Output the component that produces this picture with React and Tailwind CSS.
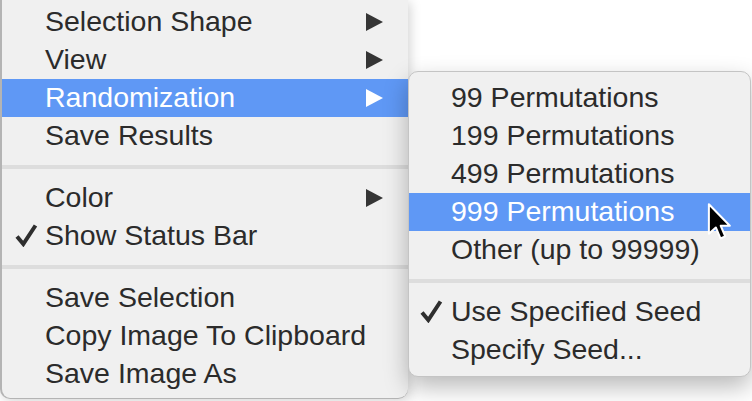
import React from "react";

const Arrow = ({ white }) => (
  <svg width="17" height="18" viewBox="0 0 17 18" className="ml-auto shrink-0">
    <path d="M0 0 L17 9 L0 18 Z" fill={white ? "#ffffff" : "#353535"} />
  </svg>
);

function Row({ label, sub, checked, active, pl = "pl-[43px]", checkLeft = "left-[12px]" }) {
  return (
    <div
      className={`relative flex h-[38px] items-center ${pl} pr-[25px] ${
        active ? "bg-[#5f98f5] text-white" : "text-[#2b2b2b]"
      }`}
    >
      {checked && (
        <span className={`absolute ${checkLeft} top-[6px]`}>
          <svg width="24" height="24" viewBox="0 0 24 24">
            <path d="M3 13.5 L9.3 21 L21.5 2.5" fill="none" stroke="#2e2e2e" strokeWidth="4" strokeLinejoin="miter" />
          </svg>
        </span>
      )}
      <span className="text-[28.5px] leading-none whitespace-nowrap -mt-[1px]">{label}</span>
      {sub && <Arrow white={active} />}
    </div>
  );
}

const Sep = () => (
  <div className="flex h-[24px] items-center">
    <div className="h-[4px] w-full bg-[#dddddd]" />
  </div>
);

export default function App() {
  return (
    <div className="relative h-[401px] w-[752px] overflow-hidden bg-white font-['Liberation_Sans',Arial,sans-serif]">
      <div className="flex items-start">
        <div className="relative z-0 h-[399px] w-[408px] shrink-0 rounded-b-[10px] border-l-2 border-b border-[#b4b4b4] bg-[#f0f0f0] pt-[3px] shadow-[2px_2px_12px_rgba(0,0,0,0.18)]">
          <Row label="Selection Shape" sub />
          <Row label="View" sub />
          <Row label="Randomization" sub active />
          <Row label="Save Results" />
          <Sep />
          <Row label="Color" sub />
          <Row label="Show Status Bar" checked />
          <Sep />
          <Row label="Save Selection" />
          <Row label="Copy Image To Clipboard" />
          <Row label="Save Image As" />
        </div>
        <div className="relative z-10 mt-[71px] w-[343px] shrink-0 rounded-[10px] border border-[#c4c4c4] bg-[#f0f0f0] py-[7px] shadow-[0_10px_24px_rgba(0,0,0,0.28)]">
          <Row label="99 Permutations" pl="pl-[42px]" />
          <Row label="199 Permutations" pl="pl-[42px]" />
          <Row label="499 Permutations" pl="pl-[42px]" />
          <Row label="999 Permutations" pl="pl-[42px]" active />
          <Row label="Other (up to 99999)" pl="pl-[42px]" />
          <Sep />
          <Row label="Use Specified Seed" pl="pl-[42px]" checked checkLeft="left-[10px]" />
          <Row label="Specify Seed..." pl="pl-[42px]" />
        </div>
      </div>
      <svg
        className="absolute left-[706px] top-[202px] z-20"
        width="26"
        height="42"
        viewBox="0 0 18 29"
      >
        <path
          d="M2 1.5 L2 22 L6.8 17.6 L10 25.2 L13.3 23.8 L10.2 16.4 L16.5 16.4 Z"
          fill="#000"
          stroke="#fff"
          strokeWidth="1.4"
          strokeLinejoin="round"
        />
      </svg>
    </div>
  );
}
